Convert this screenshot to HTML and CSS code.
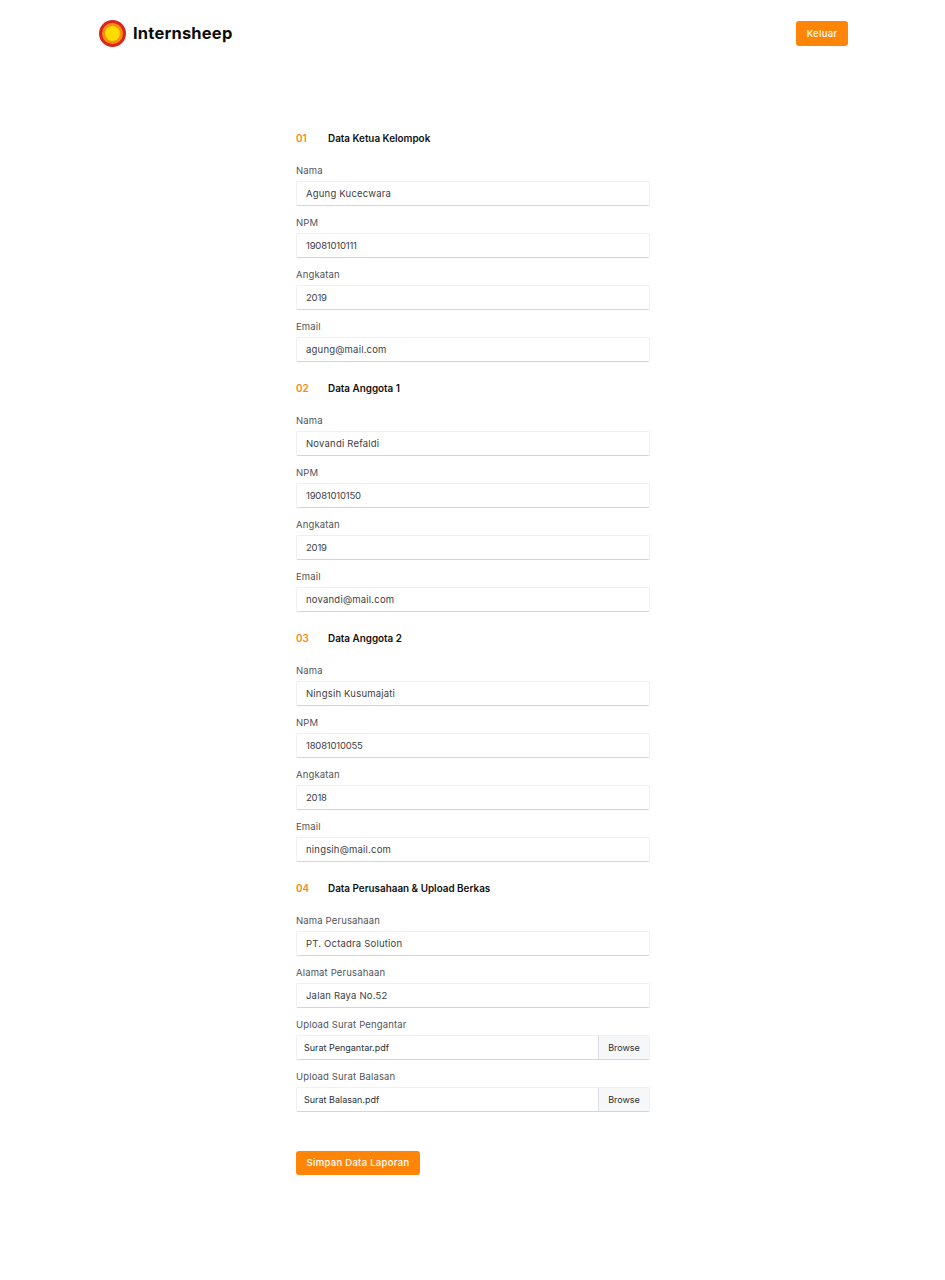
FILE: index.html
```html
<!DOCTYPE html>
<html lang="id">
<head>
    <meta charset="UTF-8">
    <meta name="viewport" content="width=device-width, initial-scale=1.0">
    <title>Internsheep</title>
    <link rel="stylesheet" href="styles.css">
</head>
<body>
<header class="navbar">
    <div class="brand">
        <svg class="logo" width="27" height="27" viewBox="0 0 27 27" aria-hidden="true">
            <circle cx="13.5" cy="13.5" r="13.5" fill="#d8281c"/>
            <circle cx="13.5" cy="13.5" r="10.5" fill="#fb8c12"/>
            <circle cx="13.5" cy="13.5" r="7.5" fill="#ffdc00"/>
        </svg>
        <span class="brand-name">Internsheep</span>
    </div>
    <a class="button button-small" href="#">Keluar</a>
</header>

<main class="form">
    <section class="section">
        <h2 class="section-title"><span class="section-no">01</span>Data Ketua Kelompok</h2>
        <div class="field"><div class="label">Nama</div><div class="input">Agung Kucecwara</div></div>
        <div class="field"><div class="label">NPM</div><div class="input input-num">19081010111</div></div>
        <div class="field"><div class="label">Angkatan</div><div class="input input-num">2019</div></div>
        <div class="field"><div class="label">Email</div><div class="input">agung@mail.com</div></div>
    </section>

    <section class="section">
        <h2 class="section-title"><span class="section-no">02</span>Data Anggota 1</h2>
        <div class="field"><div class="label">Nama</div><div class="input">Novandi Refaldi</div></div>
        <div class="field"><div class="label">NPM</div><div class="input input-num">19081010150</div></div>
        <div class="field"><div class="label">Angkatan</div><div class="input input-num">2019</div></div>
        <div class="field"><div class="label">Email</div><div class="input">novandi@mail.com</div></div>
    </section>

    <section class="section">
        <h2 class="section-title"><span class="section-no">03</span>Data Anggota 2</h2>
        <div class="field"><div class="label">Nama</div><div class="input">Ningsih Kusumajati</div></div>
        <div class="field"><div class="label">NPM</div><div class="input input-num">18081010055</div></div>
        <div class="field"><div class="label">Angkatan</div><div class="input input-num">2018</div></div>
        <div class="field"><div class="label">Email</div><div class="input">ningsih@mail.com</div></div>
    </section>

    <section class="section">
        <h2 class="section-title"><span class="section-no">04</span>Data Perusahaan &amp; Upload Berkas</h2>
        <div class="field"><div class="label">Nama Perusahaan</div><div class="input">PT. Octadra Solution</div></div>
        <div class="field"><div class="label">Alamat Perusahaan</div><div class="input">Jalan Raya No.52</div></div>
        <div class="field">
            <div class="label">Upload Surat Pengantar</div>
            <div class="input input-file"><span class="file-name">Surat Pengantar.pdf</span><span class="browse">Browse</span></div>
        </div>
        <div class="field">
            <div class="label">Upload Surat Balasan</div>
            <div class="input input-file"><span class="file-name">Surat Balasan.pdf</span><span class="browse">Browse</span></div>
        </div>
    </section>

    <a class="button button-save" href="#">Simpan Data Laporan</a>
</main>
</body>
</html>
```

FILE: styles.css
```css
* {
    box-sizing: border-box;
}

body {
    margin: 0;
    background-color: #fff;
    color: #3c4045;
    font-family: "Inter", "Liberation Sans", sans-serif;
    font-size: 9.5px;
}

.navbar {
    display: flex;
    justify-content: space-between;
    align-items: center;
    height: 66px;
    padding: 0 97px 0 99px;
}

.brand {
    display: flex;
    align-items: center;
    gap: 7px;
}

.logo {
    display: block;
}

.brand-name {
    font-size: 16.5px;
    font-weight: 700;
    letter-spacing: 0.2px;
    color: #0c0c0c;
}

.button {
    display: block;
    background-color: #ff8508;
    color: #fff;
    border-radius: 3px;
    text-decoration: none;
    text-align: center;
    font-weight: 500;
    letter-spacing: 0.3px;
}

.button-small {
    width: 52px;
    height: 25px;
    line-height: 25px;
}

.button-save {
    width: 124px;
    height: 24px;
    line-height: 24px;
    margin-top: 39px;
}

.form {
    width: 354px;
    margin-left: 296px;
    padding-top: 64px;
    padding-bottom: 105px;
}

.section {
    margin-bottom: 18px;
}

.section:last-of-type {
    margin-bottom: 0;
}

.section-title {
    display: flex;
    height: 16px;
    margin: 0 0 16px;
    font-size: 9.9px;
    line-height: 16px;
    font-weight: 600;
    color: #111;
}

.section-no {
    width: 32px;
    color: #f28a12;
}

.field {
    margin-bottom: 8px;
}

.label {
    height: 16px;
    margin-bottom: 3px;
    line-height: 18px;
    letter-spacing: 0.15px;
    color: #50545a;
}

.input {
    height: 25px;
    padding-left: 9px;
    line-height: 24px;
    letter-spacing: 0.2px;
    background-color: #fff;
    border: 1px solid #eef0f2;
    border-bottom-color: #d2d6da;
    border-radius: 2px;
}

.input-num {
    letter-spacing: -0.2px;
}

.input-file {
    display: flex;
    justify-content: space-between;
    padding-left: 7px;
    font-size: 9px;
    letter-spacing: 0;
    color: #2b2f33;
}

.browse {
    width: 51px;
    text-align: center;
    background-color: #f6f7f9;
    border-left: 1px solid #dcdfe3;
}
```
